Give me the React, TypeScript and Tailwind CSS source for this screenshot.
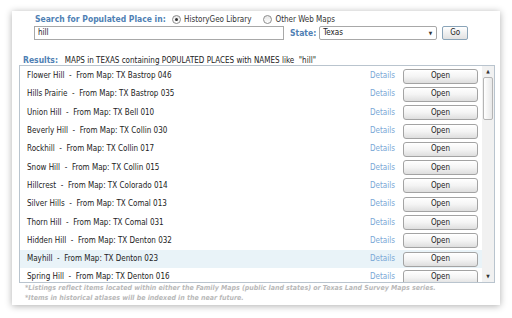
import React from 'react';

type Row = { name: string; map: string };

const rows: Row[] = [
  { name: 'Flower Hill', map: 'TX Bastrop 046' },
  { name: 'Hills Prairie', map: 'TX Bastrop 035' },
  { name: 'Union Hill', map: 'TX Bell 010' },
  { name: 'Beverly Hill', map: 'TX Collin 030' },
  { name: 'Rockhill', map: 'TX Collin 017' },
  { name: 'Snow Hill', map: 'TX Collin 015' },
  { name: 'Hillcrest', map: 'TX Colorado 014' },
  { name: 'Silver Hills', map: 'TX Comal 013' },
  { name: 'Thorn Hill', map: 'TX Comal 031' },
  { name: 'Hidden Hill', map: 'TX Denton 032' },
  { name: 'Mayhill', map: 'TX Denton 023' },
  { name: 'Spring Hill', map: 'TX Denton 016' },
];

const font = "font-['DejaVu_Sans_Condensed','Liberation_Sans',sans-serif]";

// Little radio bullet
const Radio = ({ checked }: { checked?: boolean }) => (
  <span className="flex h-[9px] w-[9px] items-center justify-center rounded-full border border-[#8d8d8d] bg-gradient-to-b from-[#e6e6e6] to-white">
    {checked && <span className="h-[3px] w-[3px] rounded-full bg-[#333]" />}
  </span>
);

const ResultRow = ({ row, active }: { row: Row; active?: boolean }) => (
  <div className={`flex h-[18.3px] shrink-0 items-center pl-[7px] pr-[4px] ${active ? 'bg-[#e9f3f8]' : ''}`}>
    <span className="flex-1 whitespace-pre text-[#222]">
      {row.name}
      {'  -  '}From Map: {row.map}
    </span>
    <span className="text-[#79a7d6]">Details</span>
    <button className="ml-[8px] h-[15px] w-[75px] rounded-[3px] border border-[#a3a3a3] bg-gradient-to-b from-white via-[#f4f4f4] to-[#dedede] text-[8px] leading-none text-[#222] shadow-[inset_0_1px_0_#fff]">
      Open
    </button>
  </div>
);

export default function App() {
  return (
    <div className={`h-[318px] w-[512px] bg-white pl-[12px] pt-[11px] text-[8px] leading-none ${font}`}>
      <div className="flex h-[294px] w-[488px] flex-col bg-white shadow-[0_1px_7px_rgba(0,0,0,0.32)]">
        {/* search header */}
        <div className="mt-[4px] flex h-[9px] shrink-0 items-center pl-[23px]">
          <span className="w-[137px] text-[8.5px] font-bold text-[#4f7fb4]">Search for Populated Place in:</span>
          <Radio checked />
          <span className="ml-[3px] text-[#333]">HistoryGeo Library</span>
          <span className="ml-[12px]">
            <Radio />
          </span>
          <span className="ml-[3px] text-[#333]">Other Web Maps</span>
        </div>
        <div className="mt-[2px] flex h-[14px] shrink-0 items-center pl-[22px]">
          <div className="flex h-[14px] w-[250px] items-center border border-[#a8a8a8] pl-[3px] text-[#222]">hill</div>
          <span className="ml-[6px] text-[8.5px] font-bold text-[#4f7fb4]">State:</span>
          <div className="ml-[3px] flex h-[14px] w-[118px] items-center justify-between rounded-[2px] border border-[#a8a8a8] pl-[3px] pr-[4px] text-[#222]">
            <span>Texas</span>
            <span className="text-[5px] text-[#333]">▼</span>
          </div>
          <button className="ml-[5px] h-[14px] w-[26px] rounded-[2px] border border-[#8aa4b8] bg-gradient-to-b from-white to-[#e1e1e1] text-[8px] leading-none text-[#222]">
            Go
          </button>
        </div>

        {/* results title */}
        <div className="mt-[16px] flex h-[9px] shrink-0 items-center whitespace-pre pl-[11px]">
          <span className="text-[8.5px] font-bold text-[#4f7fb4]">Results:</span>
          <span className="text-[#222]">{'   '}MAPS in TEXAS containing POPULATED PLACES with NAMES like  "hill"</span>
        </div>

        {/* list */}
        <div className="ml-[7px] flex h-[218px] w-[476px] shrink-0 border border-[#b9c4ce]">
          <div className="flex flex-1 flex-col overflow-hidden pt-[1px]">
            {rows.map((r, i) => (
              <ResultRow key={r.name} row={r} active={i === 10} />
            ))}
          </div>
          <div className="flex w-[12px] flex-col bg-[#f1f1f1]">
            <div className="flex h-[11px] items-center justify-center text-[5px] text-[#333]">▲</div>
            <div className="mx-[1px] h-[43px] rounded-[2px] border border-[#b5b5b5] bg-gradient-to-r from-white to-[#e8e8e8]" />
            <div className="flex-1" />
            <div className="flex h-[11px] items-center justify-center text-[5px] text-[#333]">▼</div>
          </div>
        </div>

        {/* notes */}
        <div className="pl-[13px] text-[7px] font-bold italic leading-[10px] text-[#b9b9b9]">
          <div>*Listings reflect items located within either the Family Maps (public land states) or Texas Land Survey Maps series.</div>
          <div>*Items in historical atlases will be indexed in the near future.</div>
        </div>
      </div>
    </div>
  );
}
